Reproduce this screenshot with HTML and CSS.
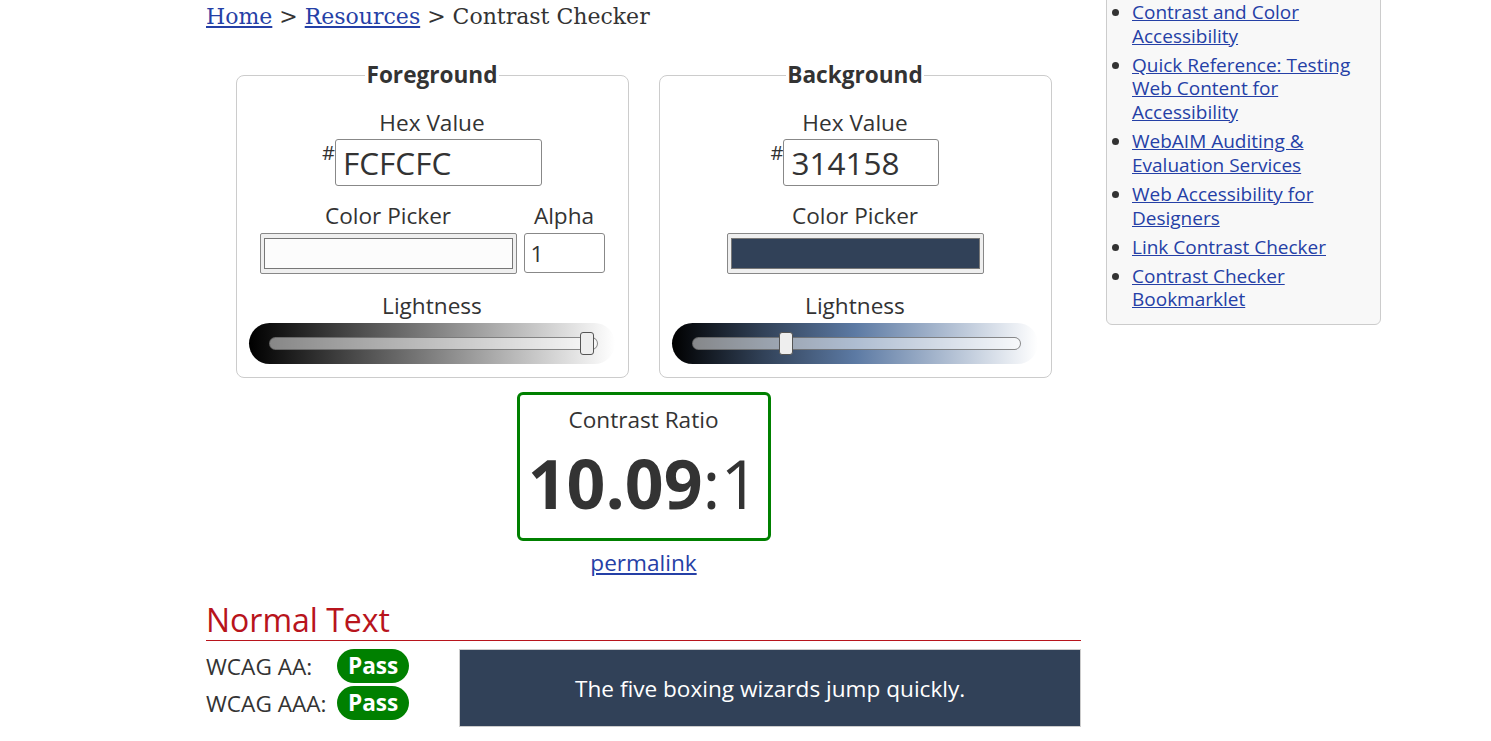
FILE: index.html
```html
<!DOCTYPE html>
<html lang="en">
<head>
<meta charset="utf-8">
<title>Contrast Checker</title>
<link rel="stylesheet" href="styles.css">
</head>
<body>
<div class="page">
  <main class="main">
    <nav class="crumbs"><a href="#">Home</a> &gt; <a href="#">Resources</a> &gt; Contrast Checker</nav>

    <div class="pickers">
      <fieldset class="panel">
        <legend>Foreground</legend>
        <div class="label first">Hex Value</div>
        <div class="hexrow"><span class="hash">#</span><input class="hex hex-fg" type="text" value="FCFCFC"></div>
        <div class="pickrow">
          <div class="pickcol">
            <div class="label">Color Picker</div>
            <div class="swatch"><span class="swatch-in" style="background:#fcfcfc"></span></div>
          </div>
          <div class="alphacol">
            <div class="label">Alpha</div>
            <input class="alpha" type="text" value="1">
          </div>
        </div>
        <div class="label">Lightness</div>
        <div class="slider slider-fg">
          <div class="track"><span class="thumb" style="left:97%"></span></div>
        </div>
      </fieldset>

      <fieldset class="panel">
        <legend>Background</legend>
        <div class="label first">Hex Value</div>
        <div class="hexrow"><span class="hash">#</span><input class="hex hex-bg" type="text" value="314158"></div>
        <div class="pickrow">
          <div class="pickcol">
            <div class="label">Color Picker</div>
            <div class="swatch"><span class="swatch-in" style="background:#314158"></span></div>
          </div>
        </div>
        <div class="label">Lightness</div>
        <div class="slider slider-bg">
          <div class="track"><span class="thumb" style="left:28.4%"></span></div>
        </div>
      </fieldset>
    </div>

    <div class="ratio-wrap">
      <div class="ratio">
        <div class="ratio-label">Contrast Ratio</div>
        <div class="ratio-value"><b>10.09</b>:1</div>
      </div>
      <a class="permalink" href="#">permalink</a>
    </div>

    <h2 class="section">Normal Text</h2>
    <div class="results">
      <div class="grades">
        <div class="grade"><span class="grade-name">WCAG AA:</span><span class="pass">Pass</span></div>
        <div class="grade"><span class="grade-name">WCAG AAA:</span><span class="pass">Pass</span></div>
      </div>
      <div class="sample">The five boxing wizards jump quickly.</div>
    </div>
  </main>

  <aside class="side">
    <ul class="links">
      <li><a href="#">Contrast and Color Accessibility</a></li>
      <li><a href="#">Quick Reference: Testing Web Content for Accessibility</a></li>
      <li><a href="#">WebAIM Auditing &amp; Evaluation Services</a></li>
      <li><a href="#">Web Accessibility for Designers</a></li>
      <li><a href="#">Link Contrast Checker</a></li>
      <li><a href="#">Contrast Checker Bookmarklet</a></li>
    </ul>
  </aside>
</div>
</body>
</html>
```

FILE: styles.css
```css
* { box-sizing: border-box; }
html, body { margin: 0; padding: 0; background: #fff; }
body {
  font-family: "Open Sans", "Noto Sans", sans-serif;
  color: #333;
  font-size: 22.6px;
  overflow: hidden;
}
a { color: #2540a6; }

.page {
  display: flex;
  align-items: flex-start;
  gap: 25px;
  padding-left: 206px;
}
.main { width: 875px; flex: none; }

.crumbs {
  font-family: "DejaVu Serif", "Liberation Serif", serif;
  font-size: 22px;
  line-height: 34px;
  color: #333;
}

.pickers {
  display: flex;
  justify-content: center;
  gap: 30px;
  margin-top: 29px;
}
.panel {
  width: 393px;
  margin: 0;
  padding: 0 12px 13px;
  border: 1px solid #ccc;
  border-radius: 8px;
  text-align: center;
}
.panel legend {
  font-weight: 700;
  font-size: 22.6px;
  padding: 0 1px;
  line-height: 24px;
  margin: 0 auto;
}
.label { line-height: 30px; }
.label.first { margin-top: 21px; }

.hexrow {
  display: flex;
  justify-content: center;
  align-items: flex-start;
  margin-top: 1px;
  margin-bottom: 15px;
}
.hash { font-size: 20px; line-height: 26px; margin-top: 1px; }
.hex {
  height: 47px;
  font-family: inherit;
  font-size: 31.5px;
  color: #333;
  padding: 0 7px;
  border: 1px solid #888;
  border-radius: 3px;
  background: #fff;
}
.hex-fg { width: 207px; }
.hex-bg { width: 156px; }

.pickrow {
  display: flex;
  justify-content: center;
  gap: 7px;
  margin-bottom: 17px;
}
.pickcol, .alphacol { display: flex; flex-direction: column; align-items: center; }
.pickcol .label, .alphacol .label { margin-bottom: 2px; }
.swatch {
  width: 257px;
  height: 41px;
  border: 1px solid #888;
  border-radius: 2px;
  background: #efefef;
  padding: 4px 3px;
  display: flex;
}
.swatch-in { flex: 1; border: 1px solid #777; }
.alpha {
  width: 81px;
  height: 40px;
  font-family: inherit;
  font-size: 22.6px;
  color: #333;
  padding: 0 6px;
  border: 1px solid #888;
  border-radius: 3px;
  background: #fff;
}

.slider {
  height: 41px;
  border-radius: 21px;
  padding: 0 17px 0 20px;
  display: flex;
  align-items: center;
  margin: 2px auto 0;
  width: 366px;
}
.slider-fg { background: linear-gradient(to right, #000, #fff); }
.slider-bg { background: linear-gradient(to right, hsl(215,28%,0%), hsl(215,28%,27%) 25%, hsl(215,28%,50%) 50%, hsl(215,28%,100%)); }
.track {
  flex: 1;
  height: 13px;
  border: 1px solid rgba(90,90,90,0.7);
  border-radius: 7px;
  background: rgba(255,255,255,0.5);
  position: relative;
}
.thumb {
  position: absolute;
  top: -6px;
  width: 14px;
  height: 23px;
  margin-left: -7px;
  border: 1px solid #555;
  border-radius: 3px;
  background: #eee;
}

.ratio-wrap {
  display: flex;
  flex-direction: column;
  align-items: center;
  margin-top: 14px;
}
.ratio {
  width: 254px;
  height: 149px;
  border: 3px solid #008000;
  border-radius: 6px;
  text-align: center;
  padding-top: 10px;
}
.ratio-label { line-height: 30px; }
.ratio-value { font-size: 68px; line-height: 86px; margin-top: 5px; }
.ratio-value b { font-weight: 700; }
.permalink { margin-top: 6px; line-height: 32px; }

.section {
  font-family: "Open Sans", "Noto Sans", sans-serif;
  font-weight: 400;
  font-size: 32px;
  color: #b8141c;
  margin: 22px 0 0;
  line-height: 38px;
  padding-bottom: 1px;
  border-bottom: 1px solid #b8141c;
}
.results {
  display: flex;
  align-items: flex-start;
  gap: 50px;
  margin-top: 8px;
}
.grades { display: flex; flex-direction: column; gap: 3px; }
.grade { display: flex; align-items: center; height: 34px; }
.grade-name { width: 131px; }
.pass {
  background: #008000;
  color: #fff;
  font-weight: 700;
  padding: 0 11px;
  height: 34px;
  line-height: 34px;
  border-radius: 17px;
}
.sample {
  flex: 1;
  height: 78px;
  background: #314158;
  border: 1px solid #ccc;
  color: #fff;
  display: flex;
  align-items: center;
  justify-content: center;
}

.side {
  width: 275px;
  flex: none;
  margin-top: -30px;
  background: #f8f8f8;
  border: 1px solid #ccc;
  border-radius: 6px;
  padding: 30px 10px 12px 0;
}
.links {
  margin: 0;
  padding-left: 25px;
  font-size: 19px;
  line-height: 23.7px;
}
.links li { margin-bottom: 5.3px; }
.links li:last-child { margin-bottom: 0; }
```
